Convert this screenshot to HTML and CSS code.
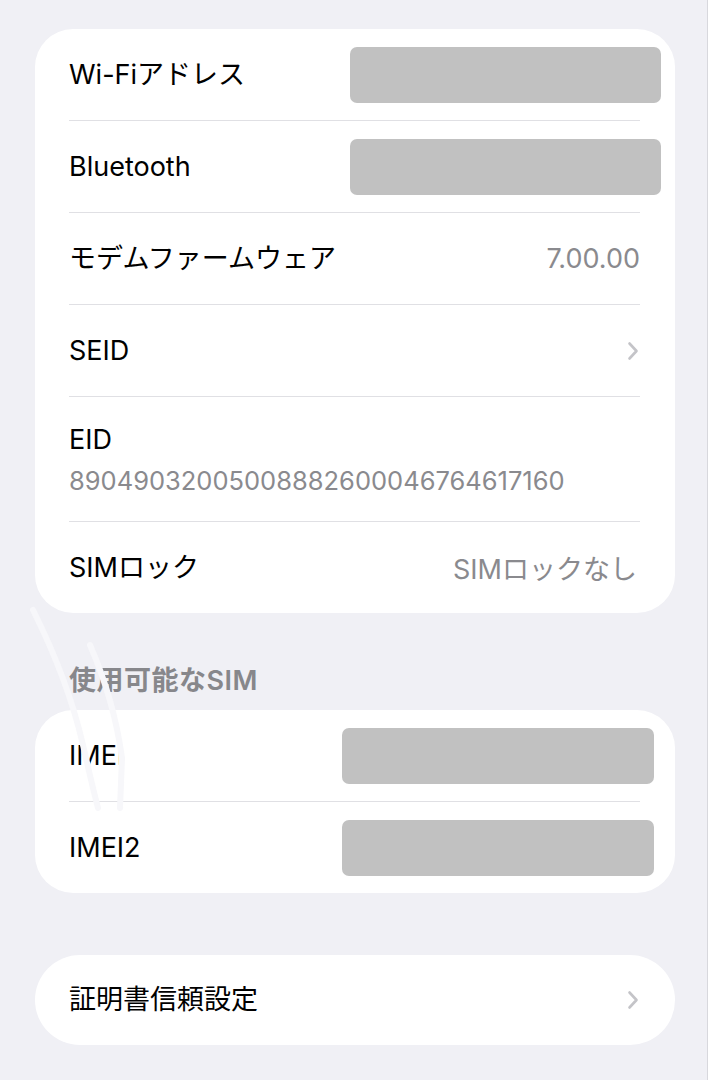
FILE: index.html
```html
<!DOCTYPE html>
<html lang="ja">
<head>
    <meta charset="UTF-8">
    <meta name="viewport" content="width=device-width, initial-scale=1.0">
    <title>情報</title>
    <link rel="stylesheet" href="styles.css">
</head>
<body>
    <div class="screen">
        <div class="group">
            <div class="row">
                <span class="label">Wi-Fiアドレス</span>
                <div class="masked"></div>
            </div>
            <div class="sep"></div>
            <div class="row">
                <span class="label">Bluetooth</span>
                <div class="masked"></div>
            </div>
            <div class="sep"></div>
            <div class="row">
                <span class="label">モデムファームウェア</span>
                <span class="value">7.00.00</span>
            </div>
            <div class="sep"></div>
            <div class="row">
                <span class="label">SEID</span>
                <svg class="chevron" width="12" height="20" viewBox="0 0 12 20"><path d="M2.5 2.5 L9.5 10 L2.5 17.5" /></svg>
            </div>
            <div class="sep"></div>
            <div class="row row-stack">
                <span class="label">EID</span>
                <span class="sub">89049032005008882600046764617160</span>
            </div>
            <div class="sep"></div>
            <div class="row">
                <span class="label">SIMロック</span>
                <span class="value value-tight">SIMロックなし</span>
            </div>
        </div>

        <h2 class="section-title">使用可能なSIM</h2>

        <div class="group group-sim">
            <div class="row">
                <span class="label">IMEI</span>
                <div class="masked"></div>
            </div>
            <div class="sep"></div>
            <div class="row">
                <span class="label">IMEI2</span>
                <div class="masked"></div>
            </div>
        </div>

        <div class="group group-pill">
            <div class="row">
                <span class="label">証明書信頼設定</span>
                <svg class="chevron" width="12" height="20" viewBox="0 0 12 20"><path d="M2.5 2.5 L9.5 10 L2.5 17.5" /></svg>
            </div>
        </div>

        <!-- rayures blanches sur la capture -->
        <svg class="scribble" width="160" height="240" viewBox="20 590 160 240">
            <path d="M33 610 Q 68 680 83 745 Q 92 785 98 808" />
            <path d="M90 645 Q 114 700 122 758 L 120 808" />
        </svg>
    </div>
</body>
</html>
```

FILE: styles.css
```css
body {
    margin: 0;
    padding: 0;
    background-color: #fff;
    font-family: Inter, "Noto Sans CJK JP", sans-serif;
}
.screen {
    position: relative;
    width: 708px;
    min-height: 1080px;
    box-sizing: border-box;
    padding: 29px 32px 0 35px;
    background-color: #f0f0f5;
    border-right: 1px solid #d8d8dd;
}
.group {
    background-color: #fff;
    border-radius: 38px;
}
.row {
    display: flex;
    align-items: center;
    justify-content: space-between;
    height: 91px;
    padding: 0 14px 0 34px;
}
.label {
    font-size: 27px;
    color: #000;
    line-height: 34px;
}
.value {
    font-size: 27px;
    color: #8a8a8e;
    margin-right: 21px;
}
.value-tight {
    margin-right: 24px;
}
.sep {
    height: 1px;
    margin: 0 35px 0 34px;
    background-color: #e0e0e4;
}
.masked {
    width: 311px;
    height: 56px;
    border-radius: 7px;
    background-color: #c1c1c1;
}
.chevron {
    margin-right: 22px;
}
.chevron path {
    fill: none;
    stroke: #c4c4c8;
    stroke-width: 2.6;
    stroke-linecap: round;
    stroke-linejoin: round;
}
.row-stack {
    flex-direction: column;
    align-items: flex-start;
    justify-content: flex-start;
    height: auto;
    padding-top: 26px;
    padding-bottom: 23px;
}
.sub {
    margin-top: 7px;
    font-size: 25.5px;
    line-height: 34px;
    color: #8a8a8e;
}
.section-title {
    margin: 51px 0 12px 34px;
    font-size: 27px;
    line-height: 34px;
    font-weight: 600;
    letter-spacing: 0.5px;
    color: #87878b;
}
.group-sim .row {
    padding-right: 21px;
}
.group-sim .masked {
    width: 312px;
}
.group-pill {
    margin-top: 62px;
    border-radius: 45px;
}
.group-pill .row {
    height: 90px;
}
.scribble {
    position: absolute;
    left: 20px;
    top: 590px;
}
.scribble path {
    fill: none;
    stroke: #f7f7fa;
    stroke-width: 6;
    stroke-linecap: round;
}
```
